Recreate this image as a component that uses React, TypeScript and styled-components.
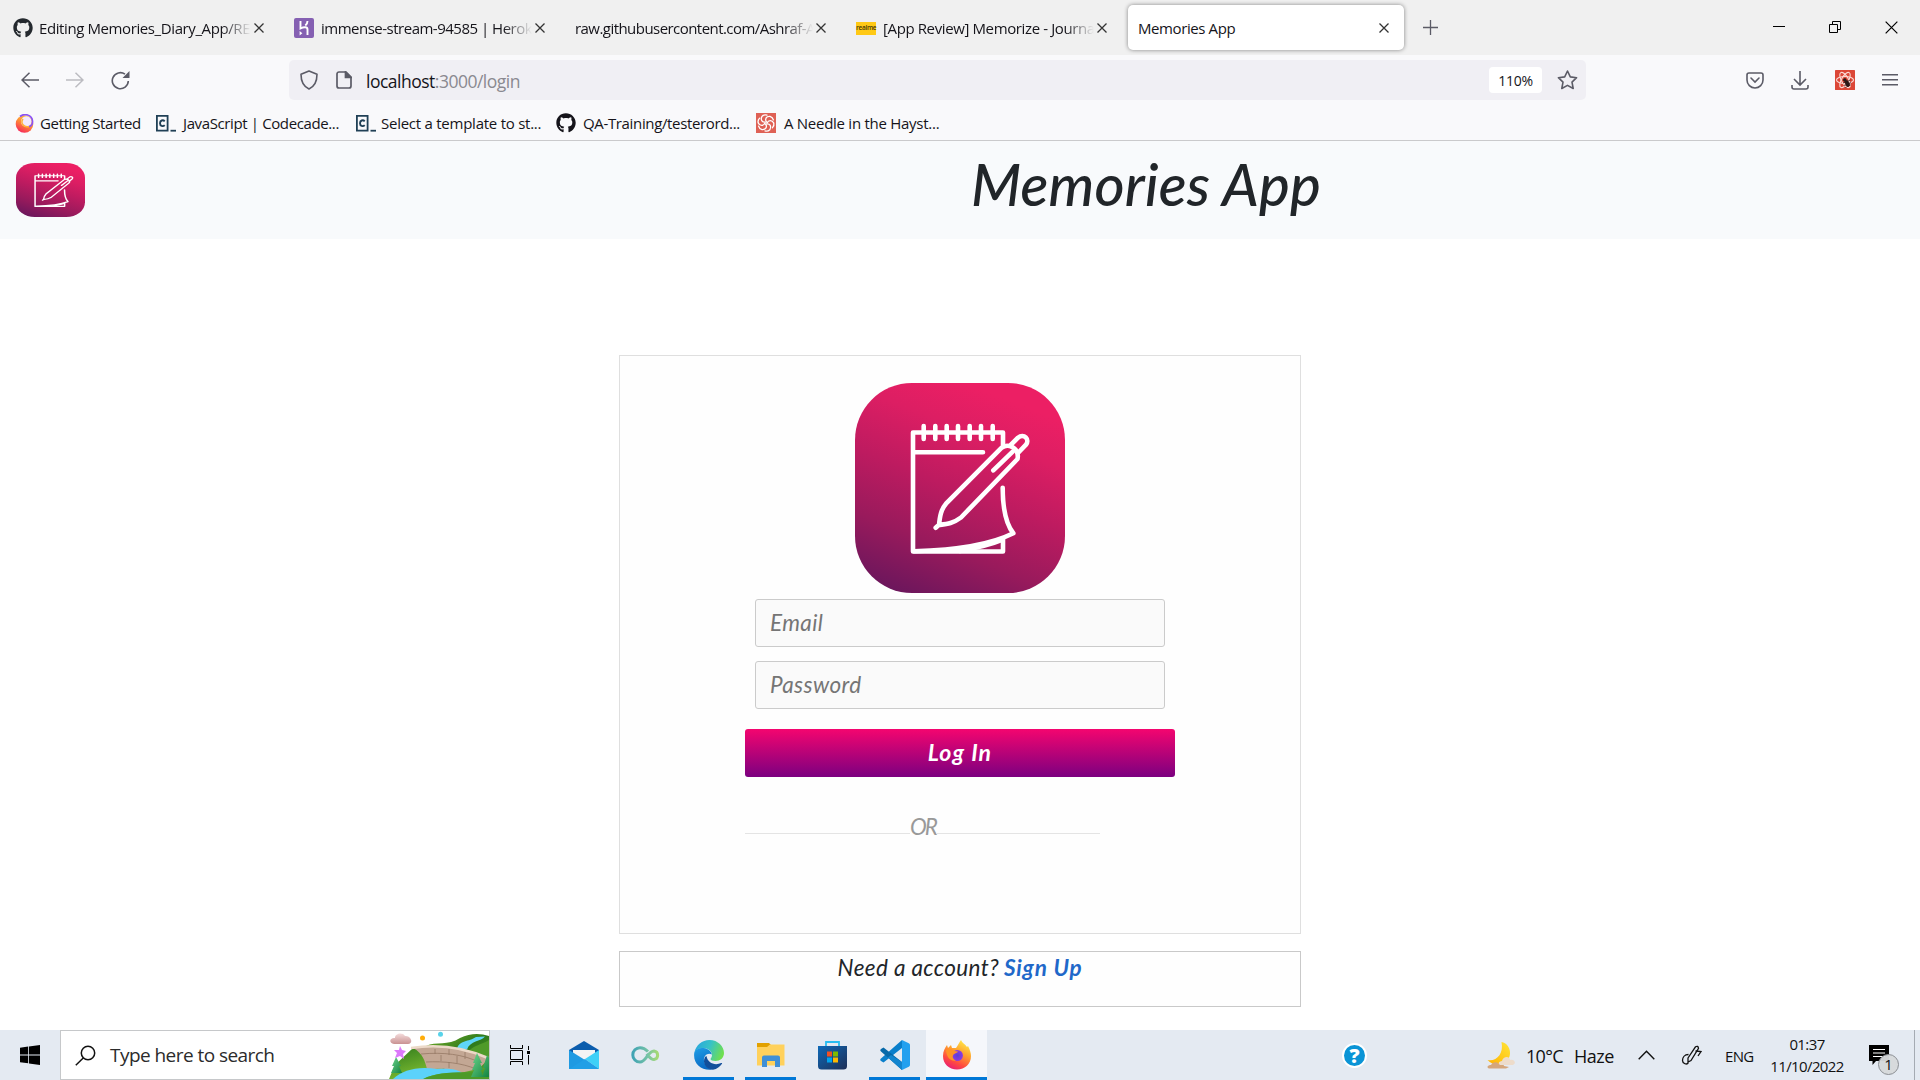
import React from "react";
import styled, { createGlobalStyle } from "styled-components";
import { FaGithub } from "react-icons/fa";

const ui = `"Open Sans", "Noto Sans", sans-serif`;
const script = `Lato, "Open Sans", sans-serif`;

const Global = createGlobalStyle`
  * { box-sizing: border-box; }
  body { margin: 0; background: #fff; font-family: ${ui}; color: #15141a; overflow: hidden; }
  svg { display: block; flex: none; }
`;

const Screen = styled.div`
  width: 1920px;
  height: 1080px;
  display: flex;
  flex-direction: column;
  overflow: hidden;
`;

/* ---------- browser chrome ---------- */

const TabStrip = styled.div`
  height: 55px;
  flex: none;
  background: #f0f0f0;
  display: flex;
  align-items: center;
`;

const Tab = styled.div<{ $w: number; $pad: number }>`
  width: ${(p) => p.$w}px;
  height: 55px;
  padding: 1px 0 0 ${(p) => p.$pad}px;
  display: flex;
  align-items: center;
`;

const TabTitle = styled.div<{ $w: number; $gap?: number; $ls?: number; $fade?: boolean }>`
  width: ${(p) => p.$w}px;
  margin-left: ${(p) => p.$gap ?? 0}px;
  font-size: 15px;
  line-height: 22px;
  letter-spacing: ${(p) => p.$ls ?? 0}px;
  white-space: nowrap;
  ${(p) => p.$fade && `mask-image: linear-gradient(to left, transparent 1px, #000 30px);`}
`;

const ActiveTab = styled.div`
  width: 276px;
  height: 45px;
  margin-right: 19px;
  padding: 1px 15px 0 10px;
  border-radius: 5px;
  background: #fff;
  box-shadow: 0 0 4px rgba(0, 0, 0, 0.45);
  display: flex;
  align-items: center;
  justify-content: space-between;
`;

const WindowButtons = styled.div`
  margin-left: auto;
  display: flex;
  align-items: center;
  gap: 44px;
  padding: 0 22px 1px 0;
`;

const NavBar = styled.div`
  height: 50px;
  flex: none;
  background: #f9f9fb;
  display: flex;
  align-items: center;
  padding-left: 21px;
`;

const NavButtons = styled.div`
  width: 268px;
  display: flex;
  align-items: center;
  gap: 27px;
`;

const UrlBar = styled.div`
  width: 1297px;
  height: 40px;
  border-radius: 5px;
  background: #f0eff4;
  display: flex;
  align-items: center;
  padding: 0 8px 0 11px;
`;

const Url = styled.div`
  margin: 2px auto 0 14px;
  font-size: 17.5px;
  letter-spacing: -0.5px;
  line-height: 24px;
  color: #15141a;
  span { color: #8a8990; }
`;

const Zoom = styled.div`
  width: 53px;
  height: 26px;
  margin-right: 15px;
  border-radius: 4px;
  background: #fff;
  font-size: 14px;
  letter-spacing: -0.3px;
  line-height: 27px;
  text-align: center;
`;

const ToolButtons = styled.div`
  width: 152px;
  margin-left: auto;
  margin-right: 22px;
  display: flex;
  align-items: center;
  justify-content: space-between;
`;

const Bookmarks = styled.div`
  height: 36px;
  flex: none;
  background: #f9f9fb;
  border-bottom: 1px solid #cacacc;
  display: flex;
  align-items: center;
  padding: 1px 0 0 15px;
`;

const Bookmark = styled.div<{ $w: number; $gap: number; $ls: number }>`
  width: ${(p) => p.$w}px;
  display: flex;
  align-items: center;
  gap: ${(p) => p.$gap}px;
  font-size: 15px;
  line-height: 22px;
  letter-spacing: ${(p) => p.$ls}px;
  white-space: nowrap;
`;

const RealmeBadge = styled.div`
  width: 20px;
  height: 13px;
  background: #ffc915;
  font-size: 6.5px;
  font-weight: 600;
  line-height: 11px;
  text-align: center;
  letter-spacing: -0.3px;
  color: #4a3a05;
`;

/* ---------- page ---------- */

const PageHeader = styled.header`
  height: 98px;
  flex: none;
  background: #f8fafc;
  display: flex;
  align-items: center;
  padding-left: 16px;
`;

const AppTitle = styled.h1`
  margin: 0 0 13px 886px;
  font-family: ${script};
  font-style: italic;
  font-weight: 500;
  font-size: 58px;
  line-height: 70px;
  letter-spacing: 0.15px;
  white-space: nowrap;
  color: #212529;
`;

const Page = styled.main`
  flex: 1;
  background: #fff;
  display: flex;
  flex-direction: column;
  align-items: center;
  padding-top: 116px;
`;

const LoginCard = styled.form`
  width: 682px;
  height: 579px;
  flex: none;
  border: 1px solid #dfdfdf;
  background: #fefefe;
  display: flex;
  flex-direction: column;
  align-items: center;
  padding-top: 27px;
`;

const Field = styled.input<{ $top: number }>`
  width: 410px;
  height: 48px;
  margin-top: ${(p) => p.$top}px;
  padding: 0 14px 2px;
  border: 1px solid #cbcbcb;
  border-radius: 3px;
  background: #fafafa;
  font-family: ${script};
  font-style: italic;
  font-size: 22.5px;
  letter-spacing: 0.4px;
  &::placeholder { color: #757575; opacity: 1; }
`;

const LoginButton = styled.button`
  width: 430px;
  height: 48px;
  margin-top: 20px;
  padding: 0 0 2px;
  border: 0;
  border-radius: 3px;
  background: linear-gradient(#f4056f, #7b0080);
  font-family: ${script};
  font-style: italic;
  font-weight: 700;
  font-size: 23px;
  letter-spacing: 1.1px;
  color: #fff;
`;

const Divider = styled.div`
  width: 355px;
  margin: 36px 75px 0 0;
  display: flex;
  align-items: center;
  font-family: ${script};
  font-style: italic;
  font-size: 22.5px;
  line-height: 28px;
  letter-spacing: -2px;
  color: #999;
  &::before, &::after { content: ""; height: 1px; margin-top: 13px; background: #e4e4e4; }
  &::before { width: 165px; }
  &::after { flex: 1; }
`;

const SignUpCard = styled.div`
  width: 682px;
  height: 56px;
  flex: none;
  margin-top: 17px;
  padding-top: 2px;
  border: 1px solid #c9c9c9;
  background: #fefefe;
  display: flex;
  justify-content: center;
  gap: 5px;
  font-family: ${script};
  font-style: italic;
  font-size: 22.5px;
  line-height: 28px;
  letter-spacing: 0.4px;
  color: #212529;
`;

const SignUpLink = styled.a`
  font-weight: 700;
  letter-spacing: 0.8px;
  color: #1f68c9;
`;

/* ---------- taskbar ---------- */

const Taskbar = styled.footer`
  height: 50px;
  flex: none;
  background: #e4eaf2;
  display: flex;
`;

const StartButton = styled.div`
  width: 60px;
  display: grid;
  place-items: center;
`;

const SearchBox = styled.div`
  width: 430px;
  border: 1px solid #c6c8ca;
  background: #fff;
  display: flex;
  align-items: center;
  padding-left: 14px;
`;

const SearchText = styled.div`
  width: 280px;
  margin-left: 14px;
  font-size: 19px;
  letter-spacing: -0.55px;
  white-space: nowrap;
  color: #2b2b2b;
`;

const TaskApp = styled.div<{ $w?: number; $ml?: number; $open?: boolean; $active?: boolean }>`
  width: ${(p) => p.$w ?? 51}px;
  margin-left: ${(p) => p.$ml ?? 11}px;
  border-bottom: 3px solid ${(p) => (p.$open ? "#0078d7" : "transparent")};
  background: ${(p) => (p.$active ? "#f5f7fb" : "transparent")};
  display: flex;
  align-items: center;
  justify-content: center;
  padding-top: 3px;
`;

const Tray = styled.div`
  margin-left: auto;
  display: flex;
  align-items: center;
  color: #111;
`;

const TrayText = styled.div<{ $w: number; $size: number; $ls?: number }>`
  width: ${(p) => p.$w}px;
  font-size: ${(p) => p.$size}px;
  letter-spacing: ${(p) => p.$ls ?? 0}px;
  white-space: nowrap;
  padding-top: 1px;
`;

const Clock = styled.div`
  width: 76px;
  text-align: center;
  font-size: 15px;
  line-height: 22.5px;
  letter-spacing: -0.6px;
  white-space: nowrap;
`;

const Gap = styled.div<{ $w: number }>`
  width: ${(p) => p.$w}px;
`;

const ShowDesktop = styled.div`
  width: 6px;
  height: 50px;
  border-left: 1px solid #a5abb3;
`;

/* ---------- drawings ---------- */

const Cross = ({ s = 10, w = 1.3, c = "#333" }) => (
  <svg width={s} height={s} viewBox="0 0 10 10" stroke={c} strokeWidth={(w * 10) / s} fill="none">
    <path d="M.5.5l9 9M9.5.5l-9 9" />
  </svg>
);

const NotepadLogo = ({ w, h, id, sw = 4.6 }: { w: number; h: number; id: string; sw?: number }) => (
  <svg width={w} height={h} viewBox="0 0 210 210" preserveAspectRatio="none">
    <defs>
      <linearGradient id={id} gradientUnits="userSpaceOnUse" x1="45" y1="214" x2="126" y2="6">
        <stop offset="0" stopColor="#69165c" />
        <stop offset=".28" stopColor="#991a5c" />
        <stop offset=".55" stopColor="#be1b60" />
        <stop offset=".8" stopColor="#dc1e63" />
        <stop offset="1" stopColor="#ec1f64" />
      </linearGradient>
    </defs>
    <rect width="210" height="210" rx="57" fill={`url(#${id})`} />
    <g stroke="#fff" strokeWidth={sw} fill="none" strokeLinecap="round" strokeLinejoin="round">
      <path d="M148 63V49.5H58v119h90V156M60 69.3h68" />
      <path d="M68.7 43v13M80.3 43v13M91.7 43v13M103 43v13M114.7 43v13M126 43v13M137.7 43v13" />
      <path d="M147.7 104.7c0 18 3 36 10.6 45.600C135 162 103 167 59 168.300" />
      <path d="M105 168c17-3 30-6 42-11" />
      <path d="M80.700 144.700l3.300-3c1-9 2-15 7-21l55.700-56c6-5 18 0 15.800 11.300L106 134.500c-8 6-14 6.500-22 7.500" />
      <path d="M155 62.700l8-8c6-5 12 2 8 7l-8 8.300M138.300 87.300l19.400-18.600" />
    </g>
  </svg>
);

const Codecademy = () => (
  <svg width="20" height="17" viewBox="0 0 20 17" fill="none" stroke="#204056">
    <path d="M.9.9h10.700v14.700H.9z" strokeWidth="1.8" />
    <path d="M8.700 6.300C7 4.500 4 5.300 4 8.200s3 3.700 4.700 2" strokeWidth="1.900" />
    <path d="M14.500 15.700H20" strokeWidth="1.800" />
  </svg>
);

const FirefoxMini = () => (
  <svg width="19" height="19" viewBox="0 0 19 19">
    <defs>
      <linearGradient id="ffm" x1=".8" y1="0" x2=".3" y2="1">
        <stop offset="0" stopColor="#ffd23c" />
        <stop offset=".5" stopColor="#ff8a35" />
        <stop offset="1" stopColor="#f6265c" />
      </linearGradient>
    </defs>
    <circle cx="9.500" cy="10" r="8.800" fill="url(#ffm)" />
    <circle cx="11.300" cy="7.500" r="5.300" fill="#f2e9ff" />
    <path d="M5 2.500C9-1 17 .5 17.500 7c.2 3-1.500 5-3.500 5.500" stroke="#8b52f5" strokeWidth="1.700" fill="none" />
    <path d="M8 5c-3 4 1 9 6 7.500" stroke="#ffb03a" strokeWidth="1.500" fill="none" />
  </svg>
);

const Swirl = () => (
  <svg width="20" height="20" viewBox="0 0 20 20">
    <rect width="20" height="20" fill="#df6155" />
    <g stroke="#fff" strokeWidth="1.300" fill="none" strokeLinecap="round">
      {[0, 60, 120, 180, 240, 300].map((a) => (
        <path key={a} transform={`rotate(${a} 10 10)`} d="M10.500 9C8.500 6.500 10 3 14 3.300c2 .6 3 2 3.400 3.600" />
      ))}
    </g>
  </svg>
);

const ReactBug = () => (
  <svg width="20" height="20" viewBox="0 0 20 20">
    <rect width="20" height="20" rx=".6" fill="#dc4737" />
    <g fill="none" stroke="#fbd9d4" strokeWidth="1.100">
      <ellipse cx="10" cy="10" rx="8.500" ry="3.500" />
      <ellipse cx="10" cy="10" rx="8.500" ry="3.500" transform="rotate(60 10 10)" />
      <ellipse cx="10" cy="10" rx="8.500" ry="3.500" transform="rotate(120 10 10)" />
    </g>
    <g fill="#2a1a18" stroke="#2a1a18" strokeWidth=".7">
      <circle cx="9.800" cy="10" r="1.400" />
      <ellipse cx="12.300" cy="13.500" rx="1.800" ry="3" transform="rotate(-25 12.300 13.500)" />
      <path d="M8 13l7.500-3M9 16l7-3.500M10.500 17.500l5-2.500" />
    </g>
  </svg>
);

const Landscape = () => (
  <svg width="100" height="48" viewBox="0 0 100 48">
    <defs>
      <linearGradient id="hill" x1="0" y1="0" x2="1" y2="1">
        <stop offset="0" stopColor="#7fb52e" />
        <stop offset=".5" stopColor="#2f7a1b" />
        <stop offset="1" stopColor="#66a52c" />
      </linearGradient>
      <linearGradient id="cloud" x1="0" y1="0" x2="0" y2="1">
        <stop offset="0" stopColor="#f4dcdc" />
        <stop offset="1" stopColor="#c99292" />
      </linearGradient>
      <linearGradient id="tree" x1="0" y1="0" x2="1" y2="1">
        <stop offset="0" stopColor="#6ed68e" />
        <stop offset="1" stopColor="#14833f" />
      </linearGradient>
      <linearGradient id="field" x1="0" y1="0" x2="1" y2="1">
        <stop offset="0" stopColor="#2e7a1c" />
        <stop offset=".6" stopColor="#7dbb31" />
        <stop offset="1" stopColor="#3b8420" />
      </linearGradient>
    </defs>
    <path d="M37 15c10-5 22 0 34-8 10-5 20-5 29-2v43H30z" fill="url(#hill)" />
    <path d="M68 18c2-9 12-7 19-12l9-.5c-4 5-15 4-18 13z" fill="#5fd6f8" />
    <path d="M80 20c5-6 12-6 20-11v20z" fill="#4f9a28" />
    <path d="M0 48L6 34 24 17h16l16 24 44-5v12z" fill="url(#field)" />
    <path d="M24 17c10 5 12 14 14 21 13 0 21-2 33 4l18-4c5-4 8-7 10-11-22-11-48-14-77-10z" fill="#c3a794" />
    <path d="M22 17c25-4 52-1 77 10" stroke="#ecd9c8" strokeWidth="2.500" fill="none" />
    <path d="M32 23c22-2 42 0 60 9M37 31c18-1 36 1 50 7M46 18v5M60 18v6M76 21v7M52 24v6M68 25v7M60 31v6" stroke="#957864" fill="none" strokeWidth=".8" />
    <path d="M4 48c10-9 24-13 44-10 10-1 22 0 25 4-14 0-28 0-38 6z" fill="#5bd2fb" />
    <path d="M34 48c16-8 40-7 66-6v6z" fill="#4c9a28" />
    <g fill="url(#tree)">
      <path d="M7 26l5 9h-2l3 7H2l3-7H3z" />
      <path d="M88 22l5 10h-2l3 7h-2l2 7H82l3-7h-2l3-7h-2zM98 24l2 3v19h-7l3-9h-2z" />
    </g>
    <path d="M5 13C-1 12 1 6 6 7c0-5 8-6 10-2 6-1 9 8 3 8z" fill="url(#cloud)" />
    <path d="M11 15l2 4 4 1-3 3 1 5-4-3-5 2 2-5-3-3 5 0z" fill="#dc79fb" />
    <circle cx="33.500" cy="7" r="2.500" fill="#ffad0a" />
    <circle cx="51.500" cy="3.300" r="2.500" fill="#58d3ea" />
  </svg>
);

const Mail = () => (
  <svg width="30" height="28" viewBox="0 0 30 28">
    <path d="M0 9L15 0l15 9v4H0z" fill="#0a5cad" />
    <path d="M4 9h22v10H4z" fill="#f4f4f4" />
    <path d="M0 9l16 10L30 28H0z" fill="#1f9ae2" />
    <path d="M30 9L16 18l14 10z" fill="#3fd0f7" />
    <path d="M0 28l16-10 14 10z" fill="#219fe6" />
  </svg>
);

const Infinity8 = () => (
  <svg width="30" height="18" viewBox="0 0 30 18">
    <defs>
      <linearGradient id="inf"><stop offset="0" stopColor="#3fa3b4" /><stop offset=".6" stopColor="#76c3a6" /><stop offset="1" stopColor="#a6d974" /></linearGradient>
    </defs>
    <path d="M17 5.500C14 2.500 12 1.700 9 1.700a7.200 7.200 0 0 0 0 14.400c6 0 8-11 14-11a4.300 4.300 0 0 1 0 8.500c-3 0-5-3-7.500-5.600" fill="none" stroke="url(#inf)" strokeWidth="3" />
  </svg>
);

const Edge = () => (
  <svg width="30" height="30" viewBox="0 0 30 30">
    <defs>
      <linearGradient id="eg" x1="0" y1=".2" x2="1" y2=".5"><stop offset="0" stopColor="#27a5df" /><stop offset=".5" stopColor="#37c2c7" /><stop offset="1" stopColor="#6fdf4f" /></linearGradient>
      <linearGradient id="eb" x1="0" y1="0" x2=".4" y2="1"><stop offset="0" stopColor="#1f9ee6" /><stop offset="1" stopColor="#0a69c4" /></linearGradient>
    </defs>
    <path d="M.4 12.500C2 5 8 0 15.500 0 24 0 30 6.500 30 13c0 5-4 8-8.500 8-3 0-5-1-5-2 0-.7 1.500-1.500 1.500-4 0-4-4-7-9-7-5 0-8 3-8.600 4.500z" fill="url(#eg)" />
    <path d="M.3 12.500C2 9 5 7.500 9.500 8c4.500.5 8 3.500 8.400 6.500-4-2.500-8 1-8 5 0 5 4 9.500 9 10C8 31.500-1.500 24 .3 12.500z" fill="url(#eb)" />
    <path d="M11 17c-3 6 1 12.500 8 12.700 4-.7 7-3 9-6 .4-.7-.2-1-.8-.7C21 26 13.500 23 12.500 16z" fill="#124f9b" />
  </svg>
);

const Explorer = () => (
  <svg width="28" height="24" viewBox="0 0 28 24">
    <path d="M0 0h12l2 2v4H0z" fill="#e2a100" />
    <path d="M0 4h10l3-2.500h14.500V22.500H0z" fill="#ffd15c" />
    <path d="M5 24V14.500a2 2 0 0 1 2-2h14a2 2 0 0 1 2 2V24h-5v-6h-8v6z" fill="#3f8fd6" />
  </svg>
);

const Store = () => (
  <svg width="29" height="30" viewBox="0 0 29 30">
    <defs><linearGradient id="st" x1="0" y1="0" x2="1" y2="1"><stop offset="0" stopColor="#0d69b8" /><stop offset="1" stopColor="#1f2f56" /></linearGradient></defs>
    <path d="M8 7V2h13v5" fill="none" stroke="#27bdf1" strokeWidth="1.800" />
    <path d="M0 6h29v20a3.500 3.500 0 0 1-3.500 3.500h-22A3.500 3.500 0 0 1 0 26z" fill="url(#st)" />
    <path d="M9 11.500h5v5H9z" fill="#f25022" /><path d="M15 11.500h5v5h-5z" fill="#7fba00" />
    <path d="M9 17.500h5v5H9z" fill="#00a4ef" /><path d="M15 17.500h5v5h-5z" fill="#ffb900" />
  </svg>
);

const VsCode = () => (
  <svg width="30" height="30" viewBox="0 0 30 30">
    <path d="M22 8L3.500 22.500 1 21q-1.500-1.300 0-2.500L22 0z" fill="#0a7fcb" />
    <path d="M22 22L3.500 7.500 1 9q-1.500 1.300 0 2.500L22 30z" fill="#0669a9" />
    <path d="M22 0l6.800 3.200Q30 4 30 5v20q0 1-1.200 1.800L22 30z" fill="#23a0ef" />
    <path d="M22 22L11 14.900 8 17.500 22 30z" fill="#1285cf" />
  </svg>
);

const Firefox = () => (
  <svg width="28" height="30" viewBox="0 0 28 30">
    <defs>
      <linearGradient id="ffx" x1=".8" y1="0" x2=".3" y2="1"><stop offset="0" stopColor="#fff04a" /><stop offset=".4" stopColor="#ffa32e" /><stop offset=".75" stopColor="#ff4a40" /><stop offset="1" stopColor="#e81e75" /></linearGradient>
      <radialGradient id="ffp"><stop offset="0" stopColor="#5b3fd6" /><stop offset="1" stopColor="#8f3be0" /></radialGradient>
    </defs>
    <path d="M18 0c1 3 4 4 6 7l1-1c2 4 3 7 3 10 0 8-6 13.500-14 13.500S0 24 0 16C0 11 2 8 4 5l1 3 3-3 1 3h4c2-3 3-5 5-8z" fill="url(#ffx)" />
    <circle cx="14.300" cy="15.500" r="5.600" fill="url(#ffp)" />
    <path d="M3 10c3-2 6-1 8 1l4 .5c-1 2-4 1.500-5 4-1 2 1 4.500 3 5-5 1-9-2-10-10z" fill="#ff9426" />
  </svg>
);

const Moon = () => (
  <svg width="28" height="27" viewBox="0 0 28 27">
    <defs><linearGradient id="mn" x1="0" y1="1" x2="1" y2="0"><stop offset="0" stopColor="#ffb100" /><stop offset="1" stopColor="#ffe53a" /></linearGradient></defs>
    <path d="M14.500 0c7 1 11 10 7 17-4 7-15 8-21 1C9 20 17 12 14.500 0z" fill="url(#mn)" />
    <path d="M2 26.500c-3-1-1-4 2-3.500 1-3 6-4 8-1 2-1 5 0 5 2l5 1-3 1.500z" fill="#d5a67b" />
    <path d="M13 23c-3-2 0-4 2-4 1-5 8-5 8-1 4-1 7 3 3 5z" fill="#eddccb" />
  </svg>
);

const HelpCircle = styled.div`
  width: 25px;
  height: 25px;
  border: 2px solid #fff;
  border-radius: 50%;
  background: #0a94d6;
  color: #fff;
  font-size: 20px;
  font-weight: 800;
  line-height: 21px;
  text-align: center;
`;

const Notice = styled.div`
  position: relative;
  width: 20px;
  height: 20px;
`;

const NoticeCount = styled.div`
  position: absolute;
  left: 9px;
  top: 9px;
  width: 21px;
  height: 21px;
  border: 1px solid #8b8f94;
  border-radius: 50%;
  background: rgba(214, 216, 219, 0.96);
  font-size: 15px;
  line-height: 19px;
  text-align: center;
`;

export default function App() {
  return (
    <Screen>
      <Global />
      <TabStrip>
        <Tab $w={281} $pad={13}>
          <FaGithub size={20} color="#24292e" />
          <TabTitle $w={213} $gap={6} $ls={-0.4} $fade>Editing Memories_Diary_App/RE</TabTitle>
          <Gap $w={2} />
          <Cross />
        </Tab>
        <Tab $w={281} $pad={13}>
          <svg width="20" height="20" viewBox="0 0 20 20">
            <rect width="20" height="20" rx="2" fill="#8560b2" />
            <path d="M6.500 3v7.500c3-1.500 7-2 7 1V17M13.500 3c0 2-1 3.500-2.200 4.500" stroke="#fff" strokeWidth="1.900" fill="none" />
            <path d="M5.600 13v4.500l2.800-2.200z" fill="#fff" />
          </svg>
          <TabTitle $w={212} $gap={7} $ls={-0.5} $fade>immense-stream-94585 | Heroku</TabTitle>
          <Gap $w={2} />
          <Cross />
        </Tab>
        <Tab $w={281} $pad={13}>
          <TabTitle $w={239} $ls={-0.55} $fade>raw.githubusercontent.com/Ashraf-A</TabTitle>
          <Gap $w={2} />
          <Cross />
        </Tab>
        <Tab $w={285} $pad={13}>
          <RealmeBadge>realme</RealmeBadge>
          <TabTitle $w={212} $gap={7} $ls={-0.38} $fade>[App Review] Memorize - Journa</TabTitle>
          <Gap $w={2} />
          <Cross />
        </Tab>
        <ActiveTab>
          <TabTitle $w={110} $ls={-0.4}>Memories App</TabTitle>
          <Cross />
        </ActiveTab>
        <svg width="15" height="15" viewBox="0 0 15 15" stroke="#5b5b66" strokeWidth="1.300"><path d="M7.500 0v15M0 7.500h15" /></svg>
        <WindowButtons>
          <svg width="12" height="12" viewBox="0 0 12 12"><path d="M0 5h12v1H0z" /></svg>
          <svg width="12" height="12" viewBox="0 0 12 12" fill="none" stroke="#000"><path d="M.5 3.500h8v8h-8zM3.500 3.500v-3h8v8h-3" /></svg>
          <Cross s={13} w={1.2} c="#000" />
        </WindowButtons>
      </TabStrip>

      <NavBar>
        <NavButtons>
          <svg width="18" height="16" viewBox="0 0 18 16" fill="none" stroke="#5b5b66" strokeWidth="1.500"><path d="M18 8H1M8.500.7L1 8l7.500 7.300" /></svg>
          <svg width="18" height="16" viewBox="0 0 18 16" fill="none" stroke="#bcbcc1" strokeWidth="1.500"><path d="M0 8h17M9.500.7L17 8l-7.500 7.300" /></svg>
          <svg width="19" height="19" viewBox="0 0 19 19" fill="none" stroke="#5b5b66" strokeWidth="1.600"><path d="M17.300 10A8 8 0 1 1 14 3.200" /><path d="M18.500 0v7h-7z" fill="#5b5b66" stroke="none" /></svg>
        </NavButtons>
        <UrlBar>
          <svg width="18" height="20" viewBox="0 0 18 20" fill="none" stroke="#5b5b66" strokeWidth="1.600"><path d="M9 1l8 3.300C17 11.500 14.500 16.500 9 19 3.500 16.500 1 11.500 1 4.300z" strokeLinejoin="round" /></svg>
          <Gap $w={18} />
          <svg width="16" height="18" viewBox="0 0 16 18" fill="none" stroke="#5b5b66" strokeWidth="1.700"><path d="M10 1H3a2 2 0 0 0-2 2v12a2 2 0 0 0 2 2h10a2 2 0 0 0 2-2V6z" /><path d="M9.500 1v5.500H15z" fill="#5b5b66" /></svg>
          <Url>localhost<span>:3000/login</span></Url>
          <Zoom>110%</Zoom>
          <svg width="21" height="20" viewBox="0 0 21 20" fill="none" stroke="#5b5b66" strokeWidth="1.600" strokeLinejoin="round"><path d="M10.500 1l2.800 5.900 6.300.8-4.600 4.400 1.200 6.400-5.700-3.100-5.700 3.100L6 12.100 1.400 7.700l6.300-.8z" /></svg>
        </UrlBar>
        <ToolButtons>
          <svg width="18" height="17" viewBox="0 0 18 17" fill="none" stroke="#5b5b66" strokeWidth="1.600" strokeLinecap="round"><path d="M3 1h12q2 0 2 2v5a8 8 0 0 1-16 0V3q0-2 2-2z" /><path d="M5 6l4 4 4-4" /></svg>
          <svg width="18" height="19" viewBox="0 0 18 19" fill="none" stroke="#5b5b66" strokeWidth="1.600"><path d="M9 0v14M3 8l6 6 6-6M1 14v2q0 2 2 2h12q2 0 2-2v-2" /></svg>
          <ReactBug />
          <svg width="16" height="14" viewBox="0 0 16 14" stroke="#5b5b66" strokeWidth="1.400"><path d="M0 1.700h16M0 6.700h16M0 11.700h16" /></svg>
        </ToolButtons>
      </NavBar>

      <Bookmarks>
        <Bookmark $w={141} $gap={6} $ls={-0.35}><FirefoxMini />Getting Started</Bookmark>
        <Bookmark $w={200} $gap={7} $ls={-0.38}><Codecademy />JavaScript | Codecade...</Bookmark>
        <Bookmark $w={200} $gap={5} $ls={-0.25}><Codecademy />Select a template to st...</Bookmark>
        <Bookmark $w={200} $gap={7} $ls={-0.35}><FaGithub size={20} color="#15141a" />QA-Training/testerord...</Bookmark>
        <Bookmark $w={200} $gap={8} $ls={-0.27}><Swirl />A Needle in the Hayst...</Bookmark>
      </Bookmarks>

      <PageHeader>
        <NotepadLogo w={69} h={54} id="logoSmall" />
        <AppTitle>Memories App</AppTitle>
      </PageHeader>

      <Page>
        <LoginCard>
          <NotepadLogo w={210} h={210} id="logoLarge" />
          <Field $top={6} placeholder="Email" />
          <Field $top={14} placeholder="Password" />
          <LoginButton type="button">Log In</LoginButton>
          <Divider>OR</Divider>
        </LoginCard>
        <SignUpCard>
          Need a account? <SignUpLink>Sign Up</SignUpLink>
        </SignUpCard>
      </Page>

      <Taskbar>
        <StartButton>
          <svg width="20" height="20" viewBox="0 0 20 20"><path d="M0 2.800l8.200-1.200v7.900H0zM9 1.500L20 0v9.500H9zM0 10.400h8.200v7.900L0 17.200zM9 10.400h11V20L9 18.500z" /></svg>
        </StartButton>
        <SearchBox>
          <svg width="21" height="21" viewBox="0 0 21 21" fill="none" stroke="#111" strokeWidth="1.500"><circle cx="13" cy="8" r="6.700" /><path d="M8.500 12.800L.8 20.300" /></svg>
          <SearchText>Type here to search</SearchText>
          <Landscape />
        </SearchBox>
        <TaskApp $w={60} $ml={0}>
          <svg width="20" height="20" viewBox="0 0 20 20" fill="none" stroke="#000" strokeWidth="1"><path d="M.5 5.500h12v9H.5zM.5 0v3.500h12V0M.5 20v-3.500h12V20M18.500 1v4M18.500 10v9.500" /><path d="M17 6h3v3h-3z" fill="#000" stroke="none" /></svg>
        </TaskApp>
        <TaskApp $ml={8}><Mail /></TaskApp>
        <TaskApp><Infinity8 /></TaskApp>
        <TaskApp $open $ml={12}><Edge /></TaskApp>
        <TaskApp $open><Explorer /></TaskApp>
        <TaskApp><Store /></TaskApp>
        <TaskApp $open><VsCode /></TaskApp>
        <TaskApp $open $active $w={61} $ml={6}><Firefox /></TaskApp>
        <Tray>
          <HelpCircle>?</HelpCircle>
          <Gap $w={120} />
          <Moon />
          <Gap $w={11} />
          <TrayText $w={48} $size={18} $ls={-0.7}>10°C</TrayText>
          <TrayText $w={64} $size={18} $ls={-0.5}>Haze</TrayText>
          <svg width="17" height="10" viewBox="0 0 17 10" fill="none" stroke="#111" strokeWidth="1.400"><path d="M.7 9.300l7.800-8 7.800 8" /></svg>
          <Gap $w={26} />
          <svg width="21" height="21" viewBox="0 0 21 21" fill="none" stroke="#111" strokeWidth="1.300"><path d="M7 13L14.500 1.800q2.500-1.500 3 1.500L10 15.500l-3 1.500z" /><path d="M14.500 6l5.500.5-3 4.500M7.500 9.500c-4 0-6 3-6 6s4.500 5 6 2" /></svg>
          <Gap $w={23} />
          <TrayText $w={44} $size={15} $ls={-0.7}>ENG</TrayText>
          <Clock>01:37<br />11/10/2022</Clock>
          <Gap $w={24} />
          <Notice>
            <svg width="20" height="20" viewBox="0 0 20 20"><path d="M0 0h20v16H7l-3.500 4v-4H0z" /><path d="M4 4.500h12M4 8h12M4 11.500h12" stroke="#fff" /></svg>
            <NoticeCount>1</NoticeCount>
          </Notice>
          <Gap $w={25} />
          <ShowDesktop />
        </Tray>
      </Taskbar>
    </Screen>
  );
}
